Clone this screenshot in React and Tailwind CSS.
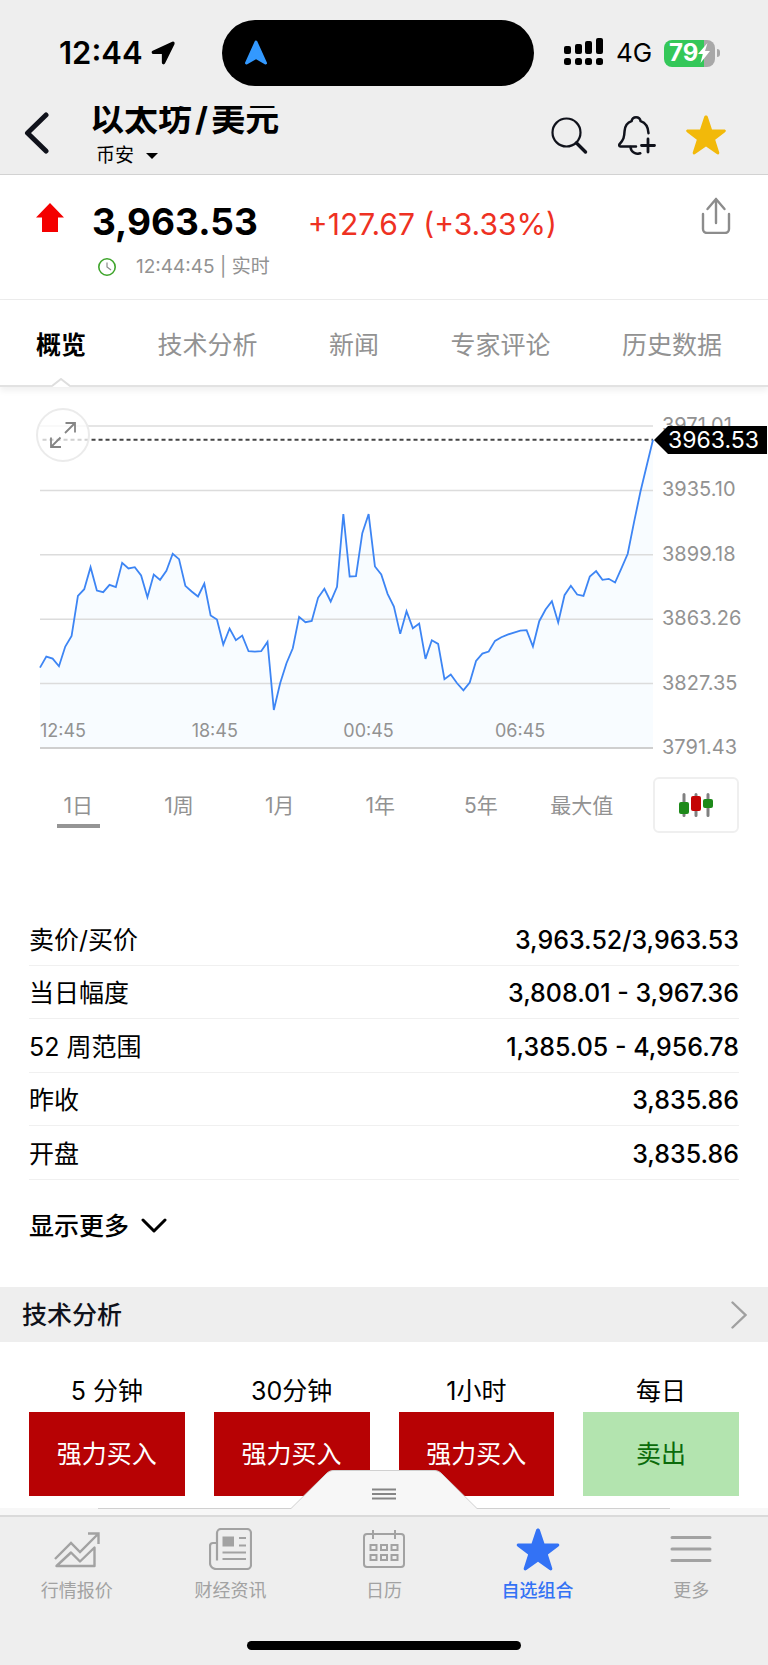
import { useState } from "react";
import clsx from "clsx";

const tabs = ["概览", "技术分析", "新闻", "专家评论", "历史数据"];

const ranges = ["1日", "1周", "1月", "1年", "5年", "最大值"];

const axisLabels = ["3971.01", "3935.10", "3899.18", "3863.26", "3827.35", "3791.43"];

const timeLabels = ["12:45", "18:45", "00:45", "06:45"];

const stats = [
  { label: "卖价/买价", value: "3,963.52/3,963.53" },
  { label: "当日幅度", value: "3,808.01 - 3,967.36" },
  { label: "52 周范围", value: "1,385.05 - 4,956.78" },
  { label: "昨收", value: "3,835.86" },
  { label: "开盘", value: "3,835.86" },
];

const signals = [
  { period: "5 分钟", verdict: "强力买入", className: "bg-[#b70204] text-white" },
  { period: "30分钟", verdict: "强力买入", className: "bg-[#b70204] text-white" },
  { period: "1小时", verdict: "强力买入", className: "bg-[#b70204] text-white" },
  { period: "每日", verdict: "卖出", className: "bg-[#b3e4af] text-[#0b6b0b]" },
];

// distance below the top grid line, 965 units from top to bottom
const series = [
  724, 691, 697, 720, 661, 629, 509, 489, 423, 493, 498, 476, 483, 410, 427, 423, 448, 513, 445, 461,
  434, 383, 399, 479, 496, 511, 472, 568, 580, 655, 607, 642, 628, 675, 676, 675, 647, 851, 771, 711,
  666, 572, 588, 584, 515, 488, 526, 482, 264, 451, 450, 321, 264, 421, 445, 503, 541, 623, 555, 606,
  592, 698, 642, 653, 759, 745, 771, 792, 769, 704, 682, 676, 644, 633, 625, 619, 613, 612, 661, 585,
  550, 525, 589, 507, 479, 505, 509, 451, 435, 461, 458, 469, 427, 383, 288, 198, 119, 41,
];

const linePoints = series.map((y, i) => `${i * 10},${y}`).join(" ");
const areaPoints = `0,965 ${linePoints} 970,965`;

const starPath =
  "M20 .5c.9 0 1.500.5 1.800 1.300l4.200 12.700h12c1.900 0 2.500 1.600 1 2.700l-9.800 7.500 4 12.600c.5 1.600-1 2.700-2.400 1.800L20 31.500 9.200 39.100c-1.400.9-2.900-.2-2.400-1.800l4-12.600L1 17.200c-1.500-1.100-.9-2.700 1-2.700h12l4.200-12.700C18.500 1 19.100.5 20 .5z";

function StatusBar() {
  return (
    <div className="grid h-[106px] grid-cols-[222fr_312fr_234fr] items-start pt-5">
      <div className="flex h-[66px] items-center gap-2 pl-[59px]">
        <span className="text-[31px] leading-8 font-semibold">12:44</span>
        <svg className="h-6 w-6" viewBox="0 0 24 24">
          <path
            d="M21.500 1.500 2 10.500c-1 .6-.7 1.700.4 1.700h9.200v9.400c0 1.200 1.300 1.400 1.800.4L22.800 2.800c.4-1-.3-1.700-1.300-1.300z"
            stroke="#000"
            strokeWidth="1.500"
            strokeLinejoin="round"
          />
        </svg>
      </div>
      <div className="flex h-[66px] items-center rounded-full bg-black pl-[22px]">
        <svg className="h-[26px] w-6" viewBox="0 0 24 26">
          <path
            d="M12 2 21.500 23 12 17.500 2.500 23z"
            fill="#3399ff"
            stroke="#3399ff"
            strokeWidth="3"
            strokeLinejoin="round"
          />
        </svg>
      </div>
      <div className="flex h-[66px] items-center pl-[30px]">
        <svg className="mb-1 h-7 w-10" viewBox="0 0 40 28">
          <rect x="0" y="9" width="7" height="8" rx="2" />
          <rect x="11" y="7" width="7" height="10" rx="2" />
          <rect x="21" y="4" width="7" height="13" rx="2" />
          <rect x="32" y="1" width="7" height="16" rx="2" />
          <rect x="0" y="21" width="7" height="7" rx="2.500" />
          <rect x="11" y="21" width="7" height="7" rx="2.500" />
          <rect x="21" y="21" width="7" height="7" rx="2.500" />
          <rect x="32" y="21" width="7" height="7" rx="2.500" />
        </svg>
        <span className="ml-3 text-[26px] leading-8">4G</span>
        <div className="ml-3 flex items-center">
          <div className="flex h-[27px] w-[51px] items-center justify-center rounded-lg bg-linear-to-r from-[#34c759] from-78% to-[#a8a8a8] to-78% text-white">
            <span className="text-[24px] leading-6 font-bold">79</span>
            <svg className="h-5 w-3" viewBox="0 0 12 20" fill="currentColor">
              <path d="M9.500 0 0 11h4.800L2.500 20 12 8H7z" />
            </svg>
          </div>
          <div className="ml-0.5 h-2 w-[3px] rounded-r-full bg-[#a8a8a8]" />
        </div>
      </div>
    </div>
  );
}

function TitleBar() {
  return (
    <div className="flex h-[68px] items-start pr-[42px] pl-6">
      <button type="button" aria-label="返回" className="mt-[5px]">
        <svg className="h-[44px] w-[26px]" viewBox="0 0 26 44" fill="none">
          <path
            d="M22 4 3.500 22 22 40"
            stroke="#10121b"
            strokeWidth="5"
            strokeLinecap="round"
            strokeLinejoin="round"
          />
        </svg>
      </button>
      <div className="ml-10 flex-1">
        <div className="h-[34px] overflow-hidden">
          <h1 className="-mt-[5px] text-[34px] leading-9 font-bold">
            以太坊<span className="mx-[3px]">/</span>美元
          </h1>
        </div>
        <button type="button" className="ml-1.5 flex items-center gap-3 text-[19px] leading-8">
          币安
          <svg className="h-1.5 w-3" viewBox="0 0 12 6">
            <path d="M0 0h12L6 6z" />
          </svg>
        </button>
      </div>
      <div className="mt-[9px] flex items-center gap-[30px]">
        <button type="button" aria-label="搜索">
          <svg className="h-10 w-[37px]" viewBox="0 0 37 40" fill="none" stroke="#10121b">
            <circle cx="15.500" cy="17.500" r="14" strokeWidth="2.200" />
            <path d="m25.500 28 9 9" strokeWidth="3.400" strokeLinecap="round" />
          </svg>
        </button>
        <button type="button" aria-label="提醒">
          <svg
            className="h-10 w-[38px]"
            viewBox="0 0 38 40"
            fill="none"
            stroke="#10121b"
            strokeWidth="2.500"
            strokeLinecap="round"
          >
            <path d="M18 31.500H2.500c-1.500 0-1.600-1.500-.9-2.400 4-4.600 4.600-6.400 5-13.300.4-4.600 3-8.400 7-9.700 1-5 8-5 9 0 4.600 1.500 7.600 5.300 7.900 12.100" />
            <path d="M12.500 32c.3 4.500 5 8 9.800 6.300" />
            <path d="M23.500 30.500h13M30 24v13" strokeWidth="2.800" />
          </svg>
        </button>
        <button type="button" aria-label="收藏">
          <svg className="h-10 w-10" viewBox="0 0 40 40" fill="#f2b90a">
            <path d={starPath} />
          </svg>
        </button>
      </div>
    </div>
  );
}

function Quote() {
  return (
    <section className="flex h-[125px] border-b border-[#ececec] pt-[21px] pr-[37px] pl-9">
      <svg className="mt-[7px] h-[29px] w-7" viewBox="0 0 28 29" fill="#f40000">
        <path d="M14 0 28 14.500h-6V29H6V14.500H0z" />
      </svg>
      <div className="ml-7 flex-1">
        <div className="flex items-baseline gap-[50px]">
          <span className="text-[37px] leading-[52px] font-bold">3,963.53</span>
          <span className="text-[30px] leading-9 text-[#ee3122]">+127.67 (+3.33%)</span>
        </div>
        <div className="ml-1.5 flex items-center text-[19px] leading-[38px] text-[#929292]">
          <svg className="mr-5 h-[18px] w-[18px]" viewBox="0 0 18 18" fill="none">
            <circle cx="9" cy="9" r="8.200" stroke="#3fa52c" strokeWidth="1.600" />
            <path d="M9 4.500V9l4 3" stroke="#8a8a8a" strokeWidth="1.200" />
          </svg>
          12:44:45 | 实时
        </div>
      </div>
      <button type="button" aria-label="分享" className="self-start">
        <svg
          className="h-[38px] w-[30px]"
          viewBox="0 0 30 38"
          fill="none"
          stroke="#8c8c8c"
          strokeWidth="2.400"
          strokeLinecap="round"
          strokeLinejoin="round"
        >
          <path d="M2 18v15a4 4 0 0 0 4 4h18a4 4 0 0 0 4-4V18" />
          <path d="M15 27V3M6.500 13 15 3l8.500 10" />
        </svg>
      </button>
    </section>
  );
}

function TabBar({ active, onChange }) {
  return (
    <nav className="flex h-[87px] justify-between border-b-2 border-[#e2e2e2] pr-[46px] pl-9 shadow-[0_4px_6px_rgba(0,0,0,0.06)]">
      {tabs.map((tab) => (
        <button
          key={tab}
          type="button"
          onClick={() => onChange(tab)}
          className={clsx(
            "relative flex items-center justify-center pt-1 text-[25px] leading-8",
            active === tab ? "font-bold text-black" : "text-[#929292]"
          )}
        >
          {tab}
          {active === tab && (
            <svg
              className="absolute -bottom-0.5 left-1/2 h-[9px] w-[18px] -translate-x-1/2"
              viewBox="0 0 18 9"
            >
              <path d="M0 9 9 1l9 8z" fill="#fff" />
              <path d="M0 8 9 1l9 7" fill="none" stroke="#dedede" strokeWidth="2" />
            </svg>
          )}
        </button>
      ))}
    </nav>
  );
}

function PriceChart() {
  return (
    <div className="flex pt-7 pl-10">
      <div className="relative mt-[11px] h-[322px] flex-1">
        <svg
          className="h-full w-full overflow-visible"
          viewBox="0 0 970 965"
          preserveAspectRatio="none"
          fill="none"
        >
          <polygon points={areaPoints} fill="#f8fcff" />
          {[0, 193, 386, 579, 772].map((y) => (
            <path key={y} d={`M0 ${y}H970`} stroke="#dcdcdc" strokeWidth="1.500" vectorEffect="non-scaling-stroke" />
          ))}
          <path d="M0 965H970" stroke="#cfcfcf" strokeWidth="2" vectorEffect="non-scaling-stroke" />
          <path
            d="M4 41H970"
            stroke="#444"
            strokeWidth="2"
            strokeDasharray="4 3"
            vectorEffect="non-scaling-stroke"
          />
          <polyline points={linePoints} stroke="#3d85f4" strokeWidth="1.800" vectorEffect="non-scaling-stroke" />
        </svg>
        <div className="absolute inset-x-0 bottom-[7px] grid grid-cols-[24fr_24fr_24fr_25fr] text-[18px] leading-5 text-[#929292]">
          {timeLabels.map((time) => (
            <span key={time}>{time}</span>
          ))}
        </div>
        <button
          type="button"
          aria-label="全屏"
          className="absolute -top-[18px] -left-1 flex h-[54px] w-[54px] items-center justify-center rounded-full border-2 border-[#ebebeb] bg-white/75"
        >
          <svg className="h-[26px] w-[26px]" viewBox="0 0 26 26" fill="none" stroke="#858585" strokeWidth="1.800">
            <path d="M15.500 1H25v9.500M25 1 15 11M1 15.500V25h10M1 25l9.500-9.500" />
          </svg>
        </button>
      </div>
      <div className="relative flex h-[342px] w-[115px] flex-col justify-between pl-[9px] text-[20px] leading-5 text-[#929292]">
        {axisLabels.map((label) => (
          <span key={label}>{label}</span>
        ))}
        <div className="absolute top-[11px] right-px left-px h-7 bg-black pl-3.5 text-[23px] leading-7 text-white [clip-path:polygon(0_50%,14px_0,100%_0,100%_100%,14px_100%)]">
          3963.53
        </div>
      </div>
    </div>
  );
}

function RangePicker({ active, onChange }) {
  return (
    <div className="mt-5 flex pr-[29px] pl-7">
      <div className="grid flex-1 grid-cols-6">
        {ranges.map((range) => (
          <button
            key={range}
            type="button"
            onClick={() => onChange(range)}
            className="flex flex-col items-center pt-[13px] text-[21px] leading-8 text-[#929292]"
          >
            {range}
            {active === range && <span className="mt-0.5 h-1 w-[43px] bg-[#959595]" />}
          </button>
        ))}
      </div>
      <button
        type="button"
        aria-label="K线图"
        className="ml-[21px] flex h-14 w-[86px] items-center justify-center rounded-md border-2 border-[#efefef]"
      >
        <svg className="h-6 w-[34px]" viewBox="0 0 34 24">
          <path d="M5 1.500v21M17 1.500v21M29 1.500v21" stroke="#808080" strokeWidth="3" strokeLinecap="round" />
          <rect x="0" y="9" width="10" height="12" rx="2" fill="#1e8a1a" />
          <rect x="12" y="3" width="10" height="15" rx="2" fill="#c40404" />
          <rect x="24" y="6" width="10" height="9" rx="2" fill="#1e8a1a" />
        </svg>
      </button>
    </div>
  );
}

function Stats() {
  return (
    <section className="mt-[79px] px-[29px]">
      <dl className="grid h-[268px] grid-rows-5">
        {stats.map((row) => (
          <div key={row.label} className="flex items-center justify-between border-b border-[#f0f0f0] pt-1">
            <dt className="text-[25px]">{row.label}</dt>
            <dd className="text-[25px] font-medium">{row.value}</dd>
          </div>
        ))}
      </dl>
      <button type="button" className="mt-7 flex items-center gap-3 text-[25px] leading-9 font-medium">
        显示更多
        <svg className="h-4 w-[26px]" viewBox="0 0 26 16" fill="none">
          <path d="m2 2 11 11L24 2" stroke="#000" strokeWidth="3" strokeLinecap="round" strokeLinejoin="round" />
        </svg>
      </button>
    </section>
  );
}

function TechnicalAnalysis() {
  return (
    <section className="mt-[43px]">
      <a href="#technical" className="flex h-[55px] items-center justify-between bg-[#eeeeee] pr-[21px] pl-[22px]">
        <h2 className="text-[25px] leading-8 font-medium text-[#10121b]">技术分析</h2>
        <svg className="h-7 w-4" viewBox="0 0 16 28" fill="none">
          <path d="m1.500 1.500 13 12.500-13 12.500" stroke="#a0a0a0" strokeWidth="2.400" strokeLinecap="round" />
        </svg>
      </a>
      <div className="grid grid-cols-4 gap-[29px] px-[29px] pt-8 pb-3">
        {signals.map((signal) => (
          <div key={signal.period} className="text-center text-[25px]">
            <div className="h-[38px] leading-[34px]">{signal.period}</div>
            <div className={clsx("flex h-[84px] items-center justify-center pt-0.5", signal.className)}>
              {signal.verdict}
            </div>
          </div>
        ))}
      </div>
    </section>
  );
}

function TrendIcon() {
  return (
    <svg className="h-10 w-[46px]" viewBox="0 0 46 40" fill="none" stroke="#a2a2a2" strokeWidth="2.400">
      <path d="M1 30 17 14l9 9L44 5M34 4.500h10.500V15" />
      <path d="M2.500 37 17 23.500l9 9L40.500 18.500V37z" strokeLinejoin="round" />
    </svg>
  );
}

function NewsIcon() {
  return (
    <svg className="h-[42px] w-[43px]" viewBox="0 0 43 42" fill="none" stroke="#a2a2a2" strokeWidth="2.200">
      <path d="M8 32.500V5a4 4 0 0 1 4-4h26a4 4 0 0 1 4 4v32a4 4 0 0 1-4 4H7a6 6 0 0 1-6-6V18a3 3 0 0 1 3-3h4" />
      <rect x="13.500" y="8.500" width="11.500" height="10" fill="#a2a2a2" stroke="none" />
      <path d="M30 10h7M30 17.500h7M13.500 24.500H37M13.500 31H37" />
    </svg>
  );
}

function CalendarIcon() {
  return (
    <svg className="h-10 w-[42px]" viewBox="0 0 42 40" fill="none" stroke="#a2a2a2" strokeWidth="2">
      <rect x="1" y="5" width="40" height="33" rx="3" />
      <path d="M10 1v9M32 1v9" />
      {[7.500, 18, 28.500].map((x) => (
        <g key={x}>
          <rect x={x} y="16" width="6" height="5" />
          <rect x={x} y="26" width="6" height="5" />
        </g>
      ))}
    </svg>
  );
}

function WatchlistIcon() {
  return (
    <svg className="h-[43px] w-11" viewBox="0 0 40 40" fill="#3372f5">
      <path d={starPath} />
    </svg>
  );
}

function MoreIcon() {
  return (
    <svg className="h-7 w-[42px]" viewBox="0 0 42 28" stroke="#a2a2a2" strokeWidth="3" strokeLinecap="round">
      <path d="M2 2.500h38M2 14h38M2 25.500h38" />
    </svg>
  );
}

const navItems = [
  { label: "行情报价", Icon: TrendIcon },
  { label: "财经资讯", Icon: NewsIcon },
  { label: "日历", Icon: CalendarIcon },
  { label: "自选组合", Icon: WatchlistIcon, active: true },
  { label: "更多", Icon: MoreIcon },
];

function BottomBar() {
  return (
    <footer className="relative">
      {/* drawer handle sits over the signal cards */}
      <button
        type="button"
        aria-label="展开"
        className="absolute bottom-full left-1/2 -mb-px h-[39px] w-[572px] -translate-x-1/2"
      >
        <svg className="h-full w-full" viewBox="0 0 572 39" fill="none">
          <path
            d="M193 38.500 228 4c3-3 5-3.500 8-3.500h100c3 0 5 .5 8 3.500l35 34.500z"
            fill="#f7f7f7"
          />
          <path
            d="M0 38.500H193L228 4c3-3 5-3.500 8-3.500h100c3 0 5 .5 8 3.500l35 34.500H572"
            stroke="#d0d0d0"
          />
          <path d="M274 19.500h24M274 24h24M274 28.500h24" stroke="#858585" strokeWidth="2" />
        </svg>
      </button>
      <div className="h-[7px] bg-[#f7f7f7]" />
      <div className="border-t-2 border-[#dadada] bg-[#eeeeee] pb-[15px]">
        <nav className="grid h-[124px] grid-cols-5">
          {navItems.map(({ label, Icon, active }) => (
            <a
              key={label}
              href="#nav"
              className={clsx(
                "flex flex-col items-center pt-2 text-[18px] leading-6",
                active ? "font-medium text-[#3372f5]" : "text-[#a2a2a2]"
              )}
            >
              <span className="flex h-12 items-center">
                <Icon />
              </span>
              <span className="mt-1.5">{label}</span>
            </a>
          ))}
        </nav>
        <div className="mx-auto h-[9px] w-[274px] rounded-full bg-black" />
      </div>
    </footer>
  );
}

export default function App() {
  const [tab, setTab] = useState("概览");
  const [range, setRange] = useState("1日");

  return (
    <div className="bg-white font-['Inter','Noto_Sans_CJK_SC',sans-serif] text-black">
      <header className="border-b border-[#d2d2d2] bg-[#eeeeee]">
        <StatusBar />
        <TitleBar />
      </header>
      <Quote />
      <TabBar active={tab} onChange={setTab} />
      <PriceChart />
      <RangePicker active={range} onChange={setRange} />
      <Stats />
      <TechnicalAnalysis />
      <BottomBar />
    </div>
  );
}
